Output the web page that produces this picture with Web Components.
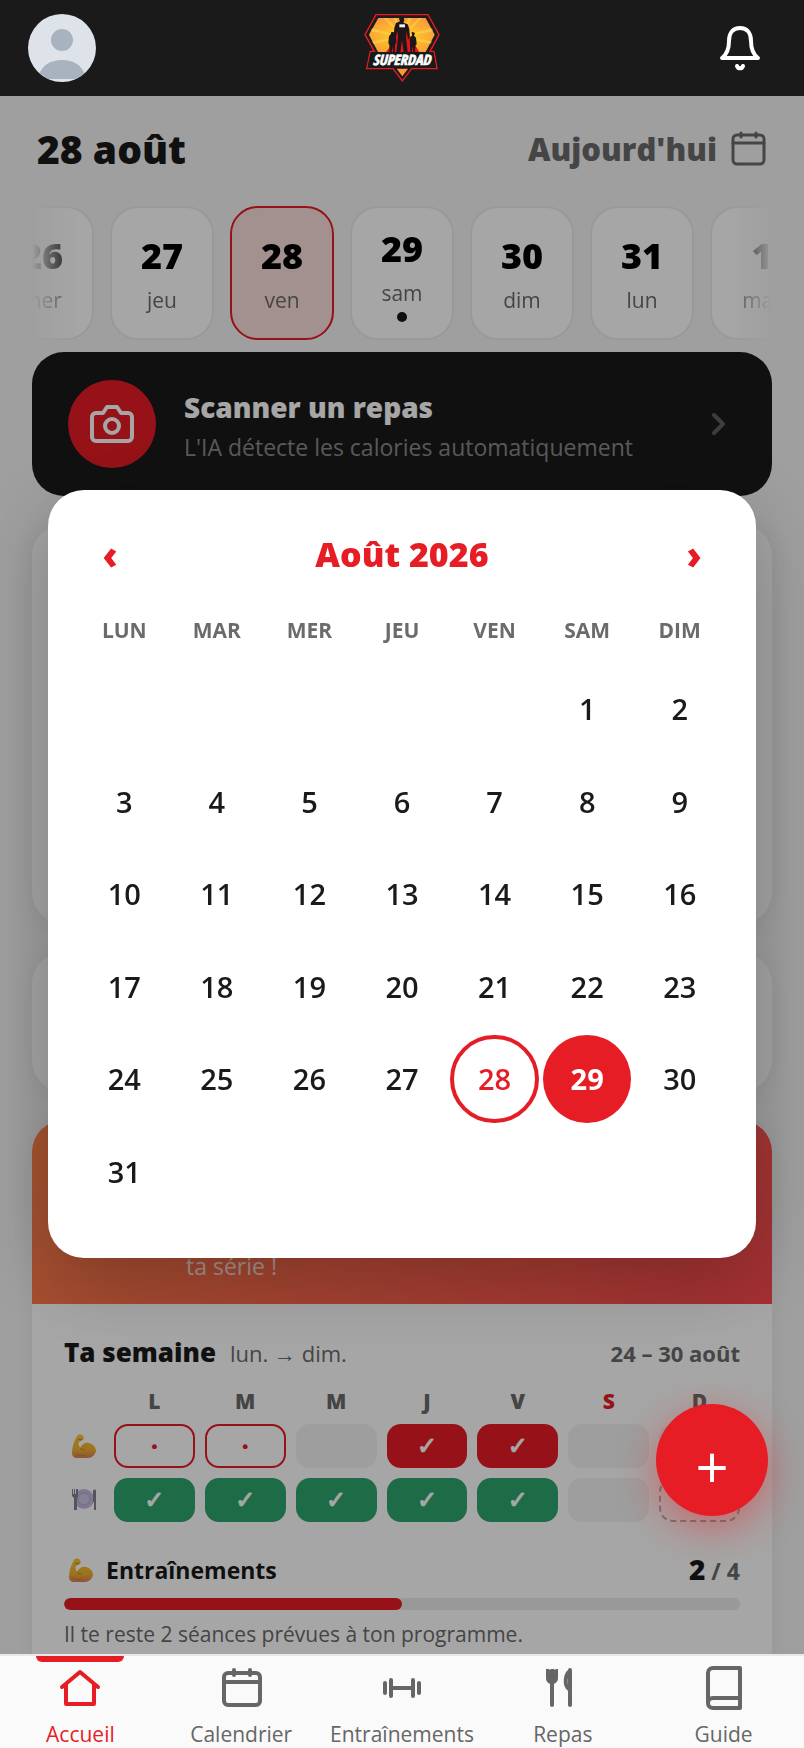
<!DOCTYPE html>
<html lang="fr">
<head>
<meta charset="utf-8">
<meta name="viewport" content="width=device-width, initial-scale=1">
<title>SuperDad · Accueil</title>
<style>
  :root{
    --red:#e71d25; --ink:#1a1a1a; --muted:#6b6b6b; --bg:#f5f5f5; --line:#ebebeb; --green:#2fa56d;
    font-family:"Open Sans","Noto Sans",sans-serif; color:var(--ink);
  }
  body{ margin:0; background:var(--bg); }
</style>
</head>
<body>

<sd-app>
  <sd-header slot="header"></sd-header>

  <sd-day-title date="28 août">Aujourd'hui</sd-day-title>
  <sd-day-strip>
    <sd-day num="26">mer</sd-day>
    <sd-day num="27">jeu</sd-day>
    <sd-day num="28" selected>ven</sd-day>
    <sd-day num="29" today>sam</sd-day>
    <sd-day num="30">dim</sd-day>
    <sd-day num="31">lun</sd-day>
    <sd-day num="1">mar</sd-day>
  </sd-day-strip>
  <sd-scan heading="Scanner un repas">L'IA détecte les calories automatiquement</sd-scan>
  <sd-card class="summary"></sd-card>
  <sd-card class="water"></sd-card>
  <sd-week></sd-week>

  <sd-month-picker slot="overlay" year="2026" month="8" selected="28" today="29"></sd-month-picker>
  <sd-fab slot="overlay"></sd-fab>
  <sd-nav slot="nav"></sd-nav>
</sd-app>

<script>
(function(){
  // petit helper : classe + shadow root ouvert + rendu
  function define(name, render){
    customElements.define(name, class extends HTMLElement {
      constructor(){
        super();
        this.attachShadow({mode:'open'});
      }
      connectedCallback(){
        this.shadowRoot.innerHTML = BASE + render(this);
      }
    });
  }

  const BASE = `
    <style>
      *{ box-sizing:border-box; }
      :host{ display:block; box-sizing:border-box; }
      button{ font:inherit; color:inherit; background:none; border:0; padding:0; margin:0; cursor:pointer; }
      a{ color:inherit; text-decoration:none; }
      svg{ display:block; flex:none; }
      .line{ fill:none; stroke:currentColor; stroke-linecap:round; stroke-linejoin:round; }
    </style>`;

  // ── icônes ──
  const ARM = `
    <svg class="emoji" width="26" height="26" viewBox="0 0 26 26" aria-hidden="true">
      <defs><linearGradient id="arm" x1="0" y1="0" x2="0" y2="1">
        <stop offset="0" stop-color="#f5c63a"/><stop offset=".65" stop-color="#f0b030"/><stop offset="1" stop-color="#e0805a"/>
      </linearGradient></defs>
      <path fill="url(#arm)" d="M6 3c1-2 5-2 6 0 1 1 1 3 0 4-1 1-3 1-4 2-1 2 0 4 1 6 2-4 5-6 9-5 4 1 7 4 7 8-1 4-4 7-8 7H6c-3 0-5-2-5-5 0-6 2-12 5-17z"/>
      <path fill="none" stroke="#c98220" stroke-width="1" stroke-linecap="round" d="M7 6c1 1 3 1 4 0M9 15c1 1 2 2 4 2M5 21c3 2 6 2 9 1"/>
    </svg>`;
  const PLATE = `
    <svg class="emoji" width="26" height="26" viewBox="0 0 26 26" aria-hidden="true">
      <circle cx="13" cy="12" r="10" fill="#c6b9dc"/>
      <circle cx="13" cy="12" r="6" fill="#cfc3e3" stroke="#b3a5cf"/>
      <path fill="#85808f" d="M1 2h1v5h1V2h1v5h1V2h2v7l-1 2v12H3V11L1 9zM22 4c0-2 3-2 3 0v19h-2v-8h-1z"/>
    </svg>`;
  const LOGO = `
    <svg width="80" height="96" viewBox="66 0 240 288" role="img" aria-label="SuperDad">
      <defs>
        <radialGradient id="sun" cx=".5" cy=".55" r=".6">
          <stop offset="0" stop-color="#ffdf1a"/><stop offset=".45" stop-color="#fdbb2c"/><stop offset="1" stop-color="#f99a3c"/>
        </radialGradient>
      </defs>
      <path fill="#201a18" stroke="#e71d25" stroke-width="4" d="M108 44H264L297 104 270 154H282L291 206H215L187 243 159 206H80L91 154H103L75 104z"/>
      <path fill="url(#sun)" d="M115 54H257L284 104 257 156H114L87 104z"/>
      <path fill="#fff06a" opacity=".35" d="M187 110 130 54h12zM187 110 160 54h10zM187 110 205 54h10zM187 110 235 54h12zM187 110 276 84l4 10zM187 110 96 84l-5 10zM187 110 95 124l5 9zM187 110 277 124l-5 9z"/>
      <path fill="#e0161e" d="M172 78 165 120 138 156H238L214 118 201 78z"/>
      <path fill="#1d1718" d="M181 51h10l2 10-3 7 13 5 5 14 1 24-5 8-4-25-2 18 5 44h-12l-5-36-5 36h-12l5-44-2-20-5 22-6-4 2-27 5-14 12-5-3-8z"/>
      <path fill="#1d1718" d="M154 96h7l2 8 5 5 1 18-4 9-1 20h-5l-2-18-2 18h-6l-1-20-3-8 2-19 5-6zM215 95l10 4-3 8 6 6 2 20-4 4-1 19h-5l-2-18-2 18h-5l-1-24-1-19 7-6z"/>
      <path fill="#eee" d="M178 73h17v9h-17z"/>
      <path fill="#1a1a1a" d="M92 158H280L288 204H83z"/>
      <path fill="#f99a3c" d="M170 206H204L187 229z"/>
      <text x="185" y="196" text-anchor="middle" fill="#fff" stroke="#fff" stroke-width="2" font-family="'Liberation Sans Narrow','Open Sans Condensed',sans-serif" font-size="43" font-style="italic" font-weight="700">SUPERDAD</text>
    </svg>`;
  const NAV_ICONS = {
    home:`<path d="M4 21 22 6l18 15M8 18v20h28V18"/>`,
    calendar:`<rect x="5" y="7" width="36" height="32" rx="4"/><path d="M5 16h36M15 4v5M31 4v5"/>`,
    dumbbell:`<path d="M5 17v10M11 14v16M11 22h22M33 14v16M39 17v10"/>`,
    meal:`<path d="M11 14v25M29 4v35M29 5c-5 3-6 15-1 18"/><path fill="currentColor" stroke="none" d="M5 3h3l1 1 1-1h3l1 1 1-1h2v9c0 4-3 6-6 6s-6-2-6-6z"/>`,
    book:`<path d="M38 2H11c-3 0-5 2-5 5v30c0 3 2 5 5 5h27zM6 37c0-3 2-5 5-5h27"/>`
  };

  // ── structure ──
  define('sd-app', ()=> `
    <style>
      :host{ display:flex; flex-direction:column; height:100vh; overflow:hidden; }
      ::slotted([slot="header"]), ::slotted([slot="nav"]){ position:relative; z-index:3; flex:none; }
      main{
        flex:1; min-height:0; overflow-y:auto; scrollbar-width:none;
        display:flex; flex-direction:column; padding:24px 32px 48px;
      }
      main > ::slotted(*){ flex:none; }
      main > ::slotted(sd-card), main > ::slotted(sd-week){ margin-top:28px; }
      main > ::slotted(.summary){ height:400px; }
      main > ::slotted(.water){ height:140px; }
    </style>
    <slot name="header"></slot>
    <main><slot></slot></main>
    <slot name="overlay"></slot>
    <slot name="nav"></slot>`);

  define('sd-header', ()=> `
    <style>
      :host{ display:flex; align-items:center; justify-content:space-between; height:96px; padding:0 28px; background:#1a1a1a; color:#fff; }
      .side{ width:72px; display:flex; align-items:center; justify-content:center; height:72px; }
      .avatar{ justify-content:flex-start; }
    </style>
    <button class="side avatar" aria-label="Profil">
      <svg width="68" height="68" viewBox="0 0 68 68">
        <defs><clipPath id="c"><circle cx="34" cy="34" r="34"/></clipPath></defs>
        <g clip-path="url(#c)">
          <rect width="68" height="68" fill="#dee3ea"/>
          <circle cx="34" cy="26" r="11" fill="#a9b3bf"/>
          <path fill="#a9b3bf" d="M11 65V61c3-10 12-15 23-15s20 5 23 15v4z"/>
        </g>
      </svg>
    </button>
    ${LOGO}
    <button class="side" aria-label="Notifications">
      <svg class="line" width="48" height="48" viewBox="0 0 48 48" stroke-width="4">
        <path d="M24 4c-7 0-11 5-11 13 0 10-3 14-7 17h36c-4-3-7-7-7-17 0-8-4-13-11-13zM21 42c1 3 5 3 6 0"/>
      </svg>
    </button>`);

  define('sd-day-title', el=> `
    <style>
      :host{ display:flex; align-items:center; justify-content:space-between; padding:0 5px; margin-bottom:28px; }
      h1{ margin:0; font-size:39px; line-height:58px; font-weight:800; }
      button{ display:flex; align-items:center; gap:14px; font-size:31px; line-height:40px; font-weight:800; color:var(--muted); }
    </style>
    <h1>${el.getAttribute('date')}</h1>
    <button>
      <slot></slot>
      <svg class="line" width="36" height="36" viewBox="0 0 36 36" stroke-width="3">
        <rect x="2" y="4" width="31" height="29" rx="4"/><path d="M2 12h31M10 2v4M25 2v4"/>
      </svg>
    </button>`);

  define('sd-day-strip', ()=> `
    <style>
      :host{
        display:flex; justify-content:center; gap:16px; overflow:hidden; margin-bottom:12px;
        mask-image:linear-gradient(90deg,transparent 0,#000 48px,#000 calc(100% - 48px),transparent 100%);
      }
    </style>
    <slot></slot>`);

  define('sd-day', el=> `
    <style>
      :host{ flex:none; }
      button{
        width:104px; height:134px; display:flex; flex-direction:column; align-items:center; justify-content:center;
        background:#fff; border:2px solid var(--line); border-radius:28px;
      }
      b{ font-size:36px; line-height:50px; font-weight:800; color:#000; }
      span{ margin-top:4px; font-size:21px; line-height:30px; color:var(--muted); }
      :host([selected]) button{ background:#fbdfde; border-color:var(--red); }
      i{ width:10px; height:10px; margin-top:4px; border-radius:50%; background:var(--ink); }
    </style>
    <button>
      <b>${el.getAttribute('num')}</b><span><slot></slot></span>
      ${el.hasAttribute('today') ? '<i></i>' : ''}
    </button>`);

  define('sd-scan', el=> `
    <style>
      button{
        width:100%; height:144px; padding:0 36px; display:flex; align-items:center; gap:28px; text-align:left;
        background:#1a1a1a; color:#fff; border-radius:32px;
      }
      .cam{ width:88px; height:88px; flex:none; display:grid; place-items:center; border-radius:50%; background:var(--red); }
      .txt{ flex:1; min-width:0; padding-top:6px; display:flex; flex-direction:column; line-height:40px; }
      b{ font-size:28px; font-weight:800; }
      small{ font-size:23px; color:#8a8a8a; }
      .chev{ color:#5e5e5e; }
    </style>
    <button>
      <span class="cam">
        <svg class="line" width="48" height="48" viewBox="0 0 48 48" stroke-width="4">
          <path d="M44 37a4 4 0 0 1-4 4H8a4 4 0 0 1-4-4V17a4 4 0 0 1 4-4h7l4-6h10l4 6h7a4 4 0 0 1 4 4z"/><circle cx="24" cy="26" r="7"/>
        </svg>
      </span>
      <span class="txt"><b>${el.getAttribute('heading')}</b><small><slot></slot></small></span>
      <svg class="line chev" width="36" height="36" viewBox="0 0 36 36" stroke-width="4"><path d="M14 9l9 9-9 9"/></svg>
    </button>`);

  define('sd-card', ()=> `
    <style>
      :host{ background:#fff; border-radius:32px; box-shadow:0 4px 24px rgba(0,0,0,.06); }
    </style>
    <slot></slot>`);

  // ── série + suivi de la semaine ──
  const LETTERS = ['L','M','M','J','V','S','D'];
  const SPORT = ['miss','miss','rest','done','done','rest','rest'];
  const MEALS = ['done','done','done','done','done','rest','plan'];
  const MARK = {done:'✓', miss:'·', rest:'', plan:''};

  define('sd-week', ()=> `
    <style>
      :host{ background:#fff; border-radius:32px; overflow:clip; box-shadow:0 4px 24px rgba(0,0,0,.06); }
      .streak{
        height:184px; padding:0 32px 20px 154px; display:flex; align-items:flex-end;
        background:linear-gradient(135deg,#ff844a,#fc484f); color:rgba(255,255,255,.8);
        font-size:23px; line-height:36px;
      }
      .streak p{ margin:0; }
      .body{ padding:30px 32px 32px; }
      .head, .goal{ display:flex; align-items:baseline; height:36px; line-height:36px; }
      h2{ margin:0 14px 0 0; font-size:26px; font-weight:800; }
      .range{ font-size:22px; color:var(--muted); }
      .dates{ margin-left:auto; font-size:22px; font-weight:700; color:var(--muted); }
      .grid{
        display:grid; grid-template-columns:40px repeat(7,1fr); gap:10px; margin-top:18px; align-items:center;
        text-align:center;
      }
      .letter{ font-size:21px; line-height:26px; font-weight:800; color:var(--muted); }
      .letter.now{ color:var(--red); }
      .emoji{ margin:0 auto; }
      .cell{
        height:44px; display:grid; place-items:center; border-radius:14px; background:#f3f3f3;
        font-size:24px; line-height:26px; font-weight:800; color:#fff;
      }
      .done{ font-family:"DejaVu Sans",sans-serif; -webkit-text-stroke:1px currentColor; }
      .sport.done{ background:var(--red); }
      .meal.done{ background:var(--green); }
      .miss{ background:none; border:2px solid var(--red); color:var(--red); }
      .plan{ background:none; border:2px dashed #a3b8ad; }
      .goal{ margin-top:30px; align-items:center; gap:12px; font-size:23px; font-weight:700; }
      .goal .emoji{ margin:0 0 0 4px; }
      .count{ margin-left:auto; color:var(--muted); }
      .count b{ font-size:28px; font-weight:800; color:var(--ink); }
      progress{
        display:block; width:100%; height:12px; margin-top:10px; appearance:none; border:0;
        border-radius:6px; background:var(--line); overflow:hidden;
      }
      progress::-webkit-progress-bar{ background:var(--line); }
      progress::-webkit-progress-value{ background:var(--red); border-radius:6px; }
      .left{ margin:9px 0 0; font-size:21px; line-height:30px; color:var(--muted); }
    </style>
    <div class="streak"><p>ta série !</p></div>
    <div class="body">
      <div class="head"><h2>Ta semaine</h2><span class="range">lun. → dim.</span><span class="dates">24 – 30 août</span></div>
      <div class="grid">
        <span></span>${LETTERS.map((l,i)=> `<span class="letter${i===5?' now':''}">${l}</span>`).join('')}
        ${ARM}${SPORT.map(s=> `<span class="cell sport ${s}">${MARK[s]}</span>`).join('')}
        ${PLATE}${MEALS.map(s=> `<span class="cell meal ${s}">${MARK[s]}</span>`).join('')}
      </div>
      <div class="goal">${ARM}<label for="p">Entraînements</label><span class="count"><b>2</b> / 4</span></div>
      <progress id="p" value="2" max="4"></progress>
      <p class="left">Il te reste 2 séances prévues à ton programme.</p>
    </div>`);

  // ── calendrier modal ──
  const MONTHS = ['Janvier','Février','Mars','Avril','Mai','Juin','Juillet','Août','Septembre','Octobre','Novembre','Décembre'];
  const WEEKDAYS = ['LUN','MAR','MER','JEU','VEN','SAM','DIM'];

  define('sd-month-picker', el=> {
    const y = +el.getAttribute('year'), m = +el.getAttribute('month');
    const offset = (new Date(y, m-1, 1).getDay() + 6) % 7;   // lundi en premier
    const count = new Date(y, m, 0).getDate();
    let days = '';
    for (let i=0; i<offset; i++) days += '<span></span>';
    for (let d=1; d<=count; d++){
      const cls = d === +el.getAttribute('selected') ? 'sel' : d === +el.getAttribute('today') ? 'today' : '';
      days += `<button class="${cls}">${d}</button>`;
    }
    return `
    <style>
      :host{ position:fixed; inset:0; z-index:2; display:grid; align-items:center; padding:0 48px; background:rgba(0,0,0,.35); }
      .box{ padding:32px 32px 42px; background:#fff; border-radius:36px; box-shadow:0 20px 80px rgba(0,0,0,.25); }
      header{ display:flex; align-items:center; justify-content:space-between; height:64px; color:var(--red); font-weight:800; }
      header button{ width:60px; height:64px; font-size:38px; line-height:64px; }
      h2{ margin:0; font-size:34px; line-height:60px; font-weight:800; }
      .grid{ display:grid; grid-template-columns:repeat(7,1fr); gap:4px; text-align:center; }
      .names{ margin:28px 0 18px; font-size:21px; line-height:32px; font-weight:700; color:var(--muted); }
      .days button{ aspect-ratio:1; border-radius:50%; font-size:29px; font-weight:600; }
      .days .sel{ border:4px solid var(--red); color:var(--red); }
      .days .today{ background:var(--red); color:#fff; font-weight:700; }
    </style>
    <div class="box" role="dialog" aria-label="Choisir une date">
      <header>
        <button aria-label="Mois précédent">‹</button>
        <h2>${MONTHS[m-1]} ${y}</h2>
        <button aria-label="Mois suivant">›</button>
      </header>
      <div class="grid names">${WEEKDAYS.map(n=> `<span>${n}</span>`).join('')}</div>
      <div class="grid days">${days}</div>
    </div>`;
  });

  define('sd-fab', ()=> `
    <style>
      :host{ position:fixed; right:36px; bottom:232px; z-index:4; }
      button{
        display:block; width:112px; height:112px; padding-top:14px; border-radius:50%; background:var(--red); color:#fff;
        font-size:58px; line-height:98px; box-shadow:0 12px 40px rgba(231,29,37,.45);
      }
    </style>
    <button aria-label="Ajouter">+</button>`);

  const TABS = [['home','Accueil'],['calendar','Calendrier'],['dumbbell','Entraînements'],['meal','Repas'],['book','Guide']];
  define('sd-nav', ()=> `
    <style>
      nav{ display:grid; grid-template-columns:repeat(5,1fr); border-top:2px solid #e8e8e8; background:#fafafa; color:#666; }
      a{ display:flex; flex-direction:column; align-items:center; gap:10px; padding-top:10px; font-size:21px; line-height:28px; }
      a[aria-current]{ color:var(--red); font-weight:500; }
      a[aria-current]::before{
        content:""; width:88px; height:6px; margin:-10px 0 -6px; border-radius:0 0 6px 6px; background:var(--red);
      }
    </style>
    <nav>
      ${TABS.map(([icon,label],i)=> `
        <a href="#${icon}" ${i===0?'aria-current="page"':''}>
          <svg class="line" width="44" height="44" viewBox="0 0 44 44" stroke-width="4">${NAV_ICONS[icon]}</svg>
          <span>${label}</span>
        </a>`).join('')}
    </nav>`);
})();
</script>
</body>
</html>
